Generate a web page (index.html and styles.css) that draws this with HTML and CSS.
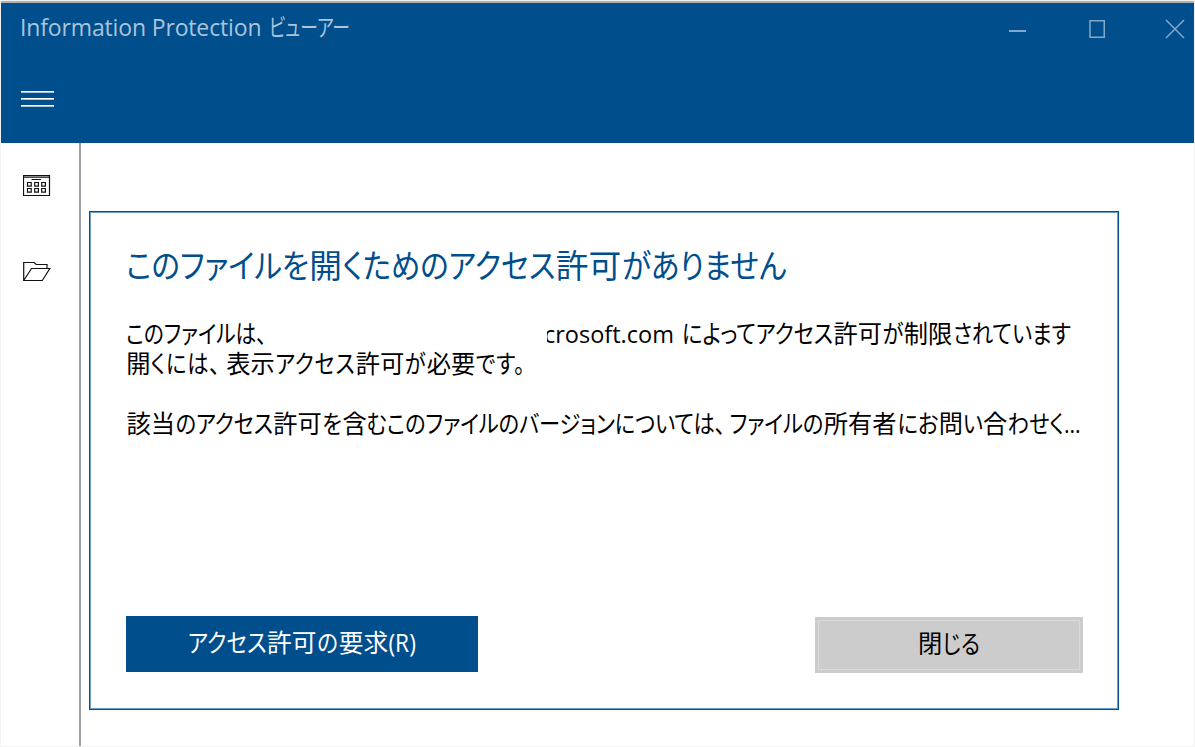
FILE: index.html
```html
<!DOCTYPE html>
<html lang="ja">
<head>
    <meta charset="UTF-8">
    <meta name="viewport" content="width=device-width, initial-scale=1.0">
    <title>Information Protection ビューアー</title>
    <link rel="stylesheet" href="styles.css">
</head>
<body>

    <div class="window">
        <header class="header">
            <div class="titlebar">
                <h1 class="app-title"><span class="app-name">Information Protection</span> <span class="app-kana">ビューアー</span></h1>
                <div class="window-controls">
                    <svg class="control" width="20" height="20" viewBox="0 0 20 20"><path d="M0 12h17" stroke-width="2"/></svg>
                    <svg class="control" width="20" height="20" viewBox="0 0 20 20"><path d="M3 1.750h14.250v16.500H3z" stroke-width="1.5"/></svg>
                    <svg class="control" width="20" height="20" viewBox="0 0 20 20"><path d="M1 1l18 18M19 1L1 19" stroke-width="1.5"/></svg>
                </div>
            </div>
            <button class="menu-button" aria-label="メニュー">
                <span></span>
                <span></span>
                <span></span>
            </button>
        </header>

        <div class="body">
            <nav class="sidebar">
                <svg class="nav-icon" width="28" height="22" viewBox="0 0 28 22">
                    <path d="M.5.5h26v20H.5zM.5 2.200h26M8.500 4.500h9.500M4.500 7.500h3.700v3.700h-3.700zM11.700 7.500h3.700v3.700h-3.700zM18.700 7.500h3.700v3.700h-3.700zM4.500 13.500h3.700v3.700h-3.700zM11.700 13.500h3.700v3.700h-3.700zM18.700 13.500h3.700v3.700h-3.700z"/>
                </svg>
                <svg class="nav-icon" width="28" height="22" viewBox="0 0 28 22">
                    <path d="M.7 19.500V1.500h10.500l2 2H24v4M.7 19.500L8.500 7.500h18.300L19.300 19.500z"/>
                </svg>
            </nav>

            <main class="content">
                <section class="dialog">
                    <h2 class="dialog-title condensed">このファイルを<span class="kanji">開</span>くためのアクセス<span class="kanji pair">許可</span>がありません</h2>
                    <div class="message">
                        <p class="line owner-line">
                            <span class="owner-start condensed">このファイルは、</span>
                            <span class="owner">crosoft.com</span>
                            <span class="owner-end condensed">によってアクセス<span class="kanji pair">許可</span>が<span class="kanji pair">制限</span>されています</span>
                        </p>
                        <p class="line need-line condensed"><span class="kanji">開</span>くには<span class="comma">、</span><span class="kanji pair">表示</span>アクセス<span class="kanji pair">許可</span>が<span class="kanji pair">必要</span>です。</p>
                        <p class="line contact-line condensed"><span class="kanji pair">該当</span>のアクセス<span class="kanji pair">許可</span>を<span class="kanji">含</span>むこのファイルのバージョンについては<span class="comma">、</span>ファイルの<span class="kanji triple">所有者</span>にお<span class="kanji">問</span>い<span class="kanji">合</span>わせく...</p>
                    </div>
                    <div class="actions">
                        <button class="button primary"><span class="label">アクセス<span class="kanji pair">許可</span>の<span class="kanji pair">要求</span><span class="latin">(R)</span></span></button>
                        <button class="button secondary"><span class="label"><span class="kanji">閉</span>じる</span></button>
                    </div>
                </section>
            </main>
        </div>
    </div>

</body>
</html>
```
FILE: styles.css
```css
:root {
    --primary-color: #004e8c;
    --primary-soft: #6f9fc5;
    --title-color: #a9c4db;
    --control-color: #84a9c8;
    --divider-color: #9b9ea2;
}

* {
    box-sizing: border-box;
}

body {
    margin: 0;
    background: #fff;
    color: #000;
    font-family: "Open Sans", "Noto Sans CJK JP", sans-serif;
    font-feature-settings: "palt";
    overflow: hidden;
}

h1, h2, p {
    margin: 0;
    font-weight: 400;
    white-space: nowrap;
}

/* --- Window frame --- */
.window {
    display: flex;
    flex-direction: column;
    width: 1195px;
    height: 747px;
    border: 1px solid #f2f2f2;
}

/* --- Header --- */
.header {
    height: 142px;
    flex: none;
    border-top: 2px solid #b1b1b1;
    background: var(--primary-color);
}

.titlebar {
    display: flex;
    justify-content: space-between;
    height: 50px;
    padding: 0 9px 0 19px;
    color: var(--title-color);
}

.app-title {
    font-size: 23px;
    line-height: 49px;
}

.app-name {
    letter-spacing: -0.15px;
}

.app-kana {
    display: inline-block;
    margin-left: 2px;
    font-size: 23.5px;
    transform: scaleX(0.755);
    transform-origin: left;
}

.window-controls {
    display: flex;
    gap: 58px;
    padding-top: 16px;
}

.control {
    fill: none;
    stroke: var(--control-color);
}

.menu-button {
    display: flex;
    flex-direction: column;
    gap: 5px;
    width: 33px;
    margin: 38px 0 0 20px;
    padding: 0;
    border: 0;
    background: none;
}

.menu-button span {
    height: 2px;
    border-top: 1px solid #fff;
    background: #a9c4db;
}

/* --- Sidebar --- */
.body {
    display: flex;
    flex: 1;
}

.sidebar {
    display: flex;
    flex-direction: column;
    gap: 64px;
    width: 80px;
    padding: 32px 0 0 22px;
    border-right: 2px solid var(--divider-color);
}

.nav-icon {
    fill: none;
    stroke: #111;
    stroke-width: 1.2;
}

/* --- Dialog --- */
.content {
    padding: 68px 0 0 8px;
}

.dialog {
    display: flex;
    flex-direction: column;
    width: 1030px;
    height: 499px;
    padding: 28px 35px 36px 36px;
    border: 1px solid var(--primary-color);
    box-shadow: inset 0 0 0 1px var(--primary-soft);
}

/* Narrow kana, the kanji inside are widened back */
.condensed {
    transform: scaleX(0.868);
    transform-origin: left;
}

.kanji {
    --chars: 1;
    display: inline-block;
    margin: 0 calc(var(--chars) * 0.082em);
    letter-spacing: 0;
    transform: scaleX(1.14);
}

.pair {
    --chars: 2;
}

.triple {
    --chars: 3;
}

.comma {
    letter-spacing: 0.2em;
}

.dialog-title {
    height: 79px;
    color: var(--primary-color);
    font-size: 33px;
    line-height: 52px;
    transform: scaleX(0.893);
}

.dialog-title .kanji {
    margin: 0 calc(var(--chars) * 0.065em);
    transform: scaleX(1.11);
}

.line {
    height: 30px;
    font-size: 24.5px;
    line-height: 30px;
}

.owner-line {
    display: flex;
}

.owner-start {
    flex: 0 0 421px;
    transform: scaleX(0.845);
}

.owner {
    flex: 0 0 135px;
    overflow: hidden;
    font-size: 23.5px;
    text-indent: -3px;
}

.need-line {
    letter-spacing: 0.8px;
}

.need-line .comma {
    letter-spacing: 0.28em;
}

.contact-line {
    margin-top: 30px;
    letter-spacing: -0.1px;
}

/* --- Buttons --- */
.actions {
    display: flex;
    justify-content: space-between;
    margin-top: auto;
}

.button {
    height: 56px;
    padding: 0 0 5px;
    border: 0;
    font: inherit;
    font-size: 24.5px;
    font-feature-settings: inherit;
}

.label {
    display: inline-block;
    transform: scaleX(0.868);
}

.latin {
    font-size: 1.05em;
}

.primary {
    width: 352px;
    background: var(--primary-color);
    color: #fff;
}

.primary .label {
    transform: scaleX(0.885);
}

.secondary {
    width: 268px;
    margin-top: 1px;
    background: #ccc;
    color: #000;
    outline: 1px solid #dadada;
    outline-offset: -4px;
}
```
